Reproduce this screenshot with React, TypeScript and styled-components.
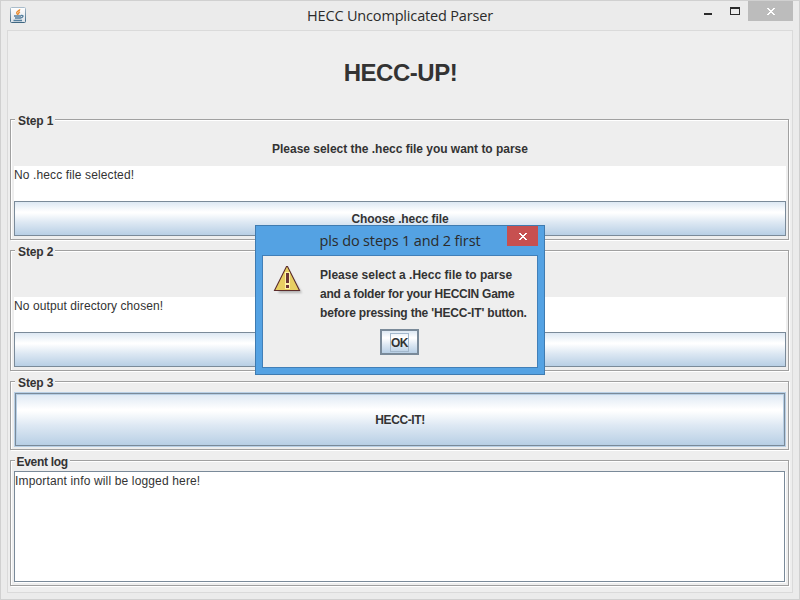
import React from "react";
import styled, { createGlobalStyle } from "styled-components";

const GlobalStyle = createGlobalStyle`
  * { box-sizing: border-box; }
  body { margin: 0; overflow: hidden; }
`;

const Window = styled.div`
  position: relative;
  width: 800px;
  height: 600px;
  padding: 0 6px 6px;
  border: 1px solid #d0d0d0;
  background: #ebebeb;
  color: #333;
  font: bold 12px/15px "Liberation Sans", Arial, sans-serif;
  display: flex;
  flex-direction: column;
`;

const TitleBar = styled.header`
  height: 29px;
  flex: none;
  display: grid;
  grid-template-columns: 110px 1fr 110px;
`;

const AppIcon = styled.svg`
  width: 16px;
  height: 16px;
  margin: 6px 0 0 3px;
`;

const Caption = styled.h1<{ $spacing: number }>`
  margin: 0;
  text-align: center;
  white-space: nowrap;
  font: 400 14.5px/29px "Open Sans", "Noto Sans", sans-serif;
  letter-spacing: ${(p) => p.$spacing}px;
  color: #2b2b2b;
`;

const WindowControls = styled.div`
  display: flex;
  justify-content: flex-end;
`;

const ControlsGlyphs = styled.svg`
  width: 44px;
  height: 20px;
`;

const CloseButton = styled.button<{ $width: number; $color: string }>`
  width: ${(p) => p.$width}px;
  height: 20px;
  padding: 0;
  border: 0;
  background: ${(p) => p.$color};
  display: flex;
  align-items: center;
  justify-content: center;
`;

const Client = styled.main`
  flex: 1;
  border: 1px solid #dadada;
  background: #eee;
  padding: 0 3px 6px 2px;
  display: flex;
  flex-direction: column;
  gap: 10px;
`;

const Heading = styled.h2`
  margin: 0;
  height: 78px;
  padding-left: 2px;
  text-align: center;
  font-size: 24px;
  line-height: 84px;
  letter-spacing: -0.45px;
`;

const Group = styled.section<{ $height: number }>`
  position: relative;
  height: ${(p) => p.$height}px;
  border: 1px solid #a0a0a0;
  box-shadow: 1px 1px 0 #fff, inset 1px 1px 0 #fff;
  padding: 10px 2px 3px 3px;
  display: flex;
  flex-direction: column;
`;

const GroupTitle = styled.h3<{ $width: number; $indent: number; $spacing?: number }>`
  position: absolute;
  left: 4px;
  top: -6px;
  width: ${(p) => p.$width}px;
  padding-left: ${(p) => p.$indent}px;
  margin: 0;
  background: #eee;
  font-size: 12px;
  line-height: 15px;
  white-space: nowrap;
  letter-spacing: ${(p) => p.$spacing ?? 0}px;
`;

const Prompt = styled.div`
  height: 36px;
  text-align: center;
  line-height: 39px;
  letter-spacing: -0.02px;
`;

const Status = styled.div<{ $spacing: number }>`
  height: 35px;
  background: #fff;
  font-weight: 400;
  line-height: 19px;
  letter-spacing: ${(p) => p.$spacing}px;
`;

const gradient = "linear-gradient(#dde8f3, #fff 30%, #fff 33%, #dde8f3 62%, #b8cfe5)";

const WideButton = styled.button`
  height: 35px;
  padding: 1px 0 0;
  border: 1px solid #7a8a99;
  background: ${gradient};
  color: #333;
  font: inherit;
  line-height: 33px;
  letter-spacing: -0.1px;
`;

const RunButton = styled(WideButton)`
  height: 53px;
  margin: 1px;
  line-height: 51px;
  letter-spacing: -0.4px;
  box-shadow: 0 0 0 1px #b8cfe5, inset 0 0 0 1px #b8cfe5;
`;

const Log = styled.div`
  height: 111px;
  margin-right: 1px;
  border: 1px solid #7a8a99;
  box-shadow: 1px 1px 0 #fff;
  background: #fff;
  font-weight: 400;
  line-height: 18px;
  letter-spacing: 0.15px;
`;

const Dialog = styled.div`
  position: absolute;
  left: 254px;
  top: 224px;
  width: 290px;
  height: 150px;
  border: 1px solid #3f7bb0;
  background: #54a2e3;
  padding: 0 6px 6px;
  display: flex;
  flex-direction: column;
`;

const DialogBar = styled.div`
  height: 29px;
  flex: none;
  display: grid;
  grid-template-columns: 31px 1fr 31px;
`;

const DialogBody = styled.div`
  flex: 1;
  border: 1px solid #417fb8;
  background: #eee;
  display: flex;
  flex-direction: column;
  align-items: center;
`;

const Message = styled.div`
  align-self: stretch;
  height: 73px;
  padding: 10px 0 0 10px;
  display: flex;
  line-height: 19px;
  white-space: nowrap;
`;

const WarningIcon = styled.svg`
  width: 32px;
  height: 32px;
  margin: -1px 15px 0 0;
  flex: none;
`;

const Line = styled.div<{ $spacing: number }>`
  letter-spacing: ${(p) => p.$spacing}px;
`;

const OkButton = styled.button`
  width: 39px;
  height: 26px;
  margin-right: 1px;
  padding: 0;
  border: 2px solid #7a8a99;
  background: ${gradient};
  display: flex;
  align-items: center;
  justify-content: center;
  color: #333;
  font: inherit;
`;

const FocusRing = styled.span`
  width: 19px;
  height: 19px;
  border: 1px solid #a3b8cc;
  line-height: 18px;
  letter-spacing: -0.4px;
  display: flex;
  justify-content: center;
`;

const CloseGlyph = () => (
  <svg width="8" height="7" viewBox="0 0 8 7" shapeRendering="crispEdges" fill="#fff">
    <path d="M0 0h2v1h1v1h2v-1h1v-1h2v1h-1v1h-1v1h-1v1h1v1h1v1h1v1h-2v-1h-1v-1h-2v1h-1v1h-2v-1h1v-1h1v-1h1v-1h-1v-1h-1v-1h-1z" />
  </svg>
);

const steps = [
  { title: "Step 1", prompt: "Please select the .hecc file you want to parse", status: "No .hecc file selected!", spacing: 0.12, action: "Choose .hecc file" },
  { title: "Step 2", prompt: "", status: "No output directory chosen!", spacing: 0.09, action: "" },
];

export default function App() {
  return (
    <>
      <GlobalStyle />
      <Window>
        <TitleBar>
          <AppIcon viewBox="0 0 16 16">
            <defs>
              <linearGradient id="frame" x2="0" y2="1">
                <stop stopColor="#a9bccb" />
                <stop offset="1" stopColor="#3f6782" />
              </linearGradient>
              <linearGradient id="face" x2="0" y2="1">
                <stop stopColor="#fff" />
                <stop offset="1" stopColor="#dce2e8" />
              </linearGradient>
            </defs>
            <rect x=".5" y=".5" width="15" height="15" rx="1" fill="url(#face)" stroke="url(#frame)" />
            <path d="M9.8 2.3C9.5 4 6 4.5 6.7 6c.3.7 1 1 .8 2M10 4.8C8 5.5 8.400 6.300 8.600 7.500" fill="none" stroke="#e9892b" strokeWidth="1.400" />
            <path d="M4 9h7M5 11h5.500M3.500 13.500h8.500M11 8.500c3-.3 2.500 2-.5 2.500" fill="none" stroke="#557f9e" strokeWidth="1.300" />
          </AppIcon>
          <Caption $spacing={-0.17}>HECC Uncomplicated Parser</Caption>
          <WindowControls>
            <ControlsGlyphs viewBox="0 0 44 20" shapeRendering="crispEdges">
              <path d="M0 12h8v2H0z" fill="#2b2b2b" />
              <path d="M26 6h10v8H26zM27 8v5h8V8z" fill="#2b2b2b" fillRule="evenodd" />
            </ControlsGlyphs>
            <CloseButton $width={45} $color="#bcbcbc" aria-label="Close"><CloseGlyph /></CloseButton>
          </WindowControls>
        </TitleBar>
        <Client>
          <Heading>HECC-UP!</Heading>
          {steps.map((s) => (
            <Group key={s.title} $height={121}>
              <GroupTitle $width={40} $indent={3} $spacing={-0.1}>{s.title}</GroupTitle>
              <Prompt>{s.prompt}</Prompt>
              <Status $spacing={s.spacing}>{s.status}</Status>
              <WideButton>{s.action}</WideButton>
            </Group>
          ))}
          <Group $height={69}>
            <GroupTitle $width={40} $indent={3} $spacing={-0.1}>Step 3</GroupTitle>
            <RunButton>HECC-IT!</RunButton>
          </Group>
          <Group $height={126}>
            <GroupTitle $width={55} $indent={1.5} $spacing={-0.3}>Event log</GroupTitle>
            <Log>Important info will be logged here!</Log>
          </Group>
        </Client>
        <Dialog role="dialog">
          <DialogBar>
            <span />
            <Caption $spacing={-0.14}>pls do steps 1 and 2 first</Caption>
            <CloseButton $width={31} $color="#c75050" aria-label="Close"><CloseGlyph /></CloseButton>
          </DialogBar>
          <DialogBody>
            <Message>
              <WarningIcon viewBox="0 0 32 32">
                <defs>
                  <filter id="soft"><feGaussianBlur stdDeviation="1.200" /></filter>
                </defs>
                <path d="M15 5L29 28H5z" fill="#999" opacity=".7" filter="url(#soft)" />
                <path d="M14.500 1.500L26.500 25.500H1.500L13.500 1.500z" fill="#e8cf62" stroke="#5c2c2c" strokeWidth="1.100" />
                <path d="M12 7h5v17h-5z" fill="#fff3a8" />
                <path d="M13 8h3v10h-3zM13 20h3v3h-3z" fill="#6b3535" />
              </WarningIcon>
              <div>
                <Line $spacing={0.02}>Please select a .Hecc file to parse</Line>
                <Line $spacing={-0.25}>and a folder for your HECCIN Game</Line>
                <Line $spacing={-0.17}>before pressing the 'HECC-IT' button.</Line>
              </div>
            </Message>
            <OkButton><FocusRing>OK</FocusRing></OkButton>
          </DialogBody>
        </Dialog>
      </Window>
    </>
  );
}
